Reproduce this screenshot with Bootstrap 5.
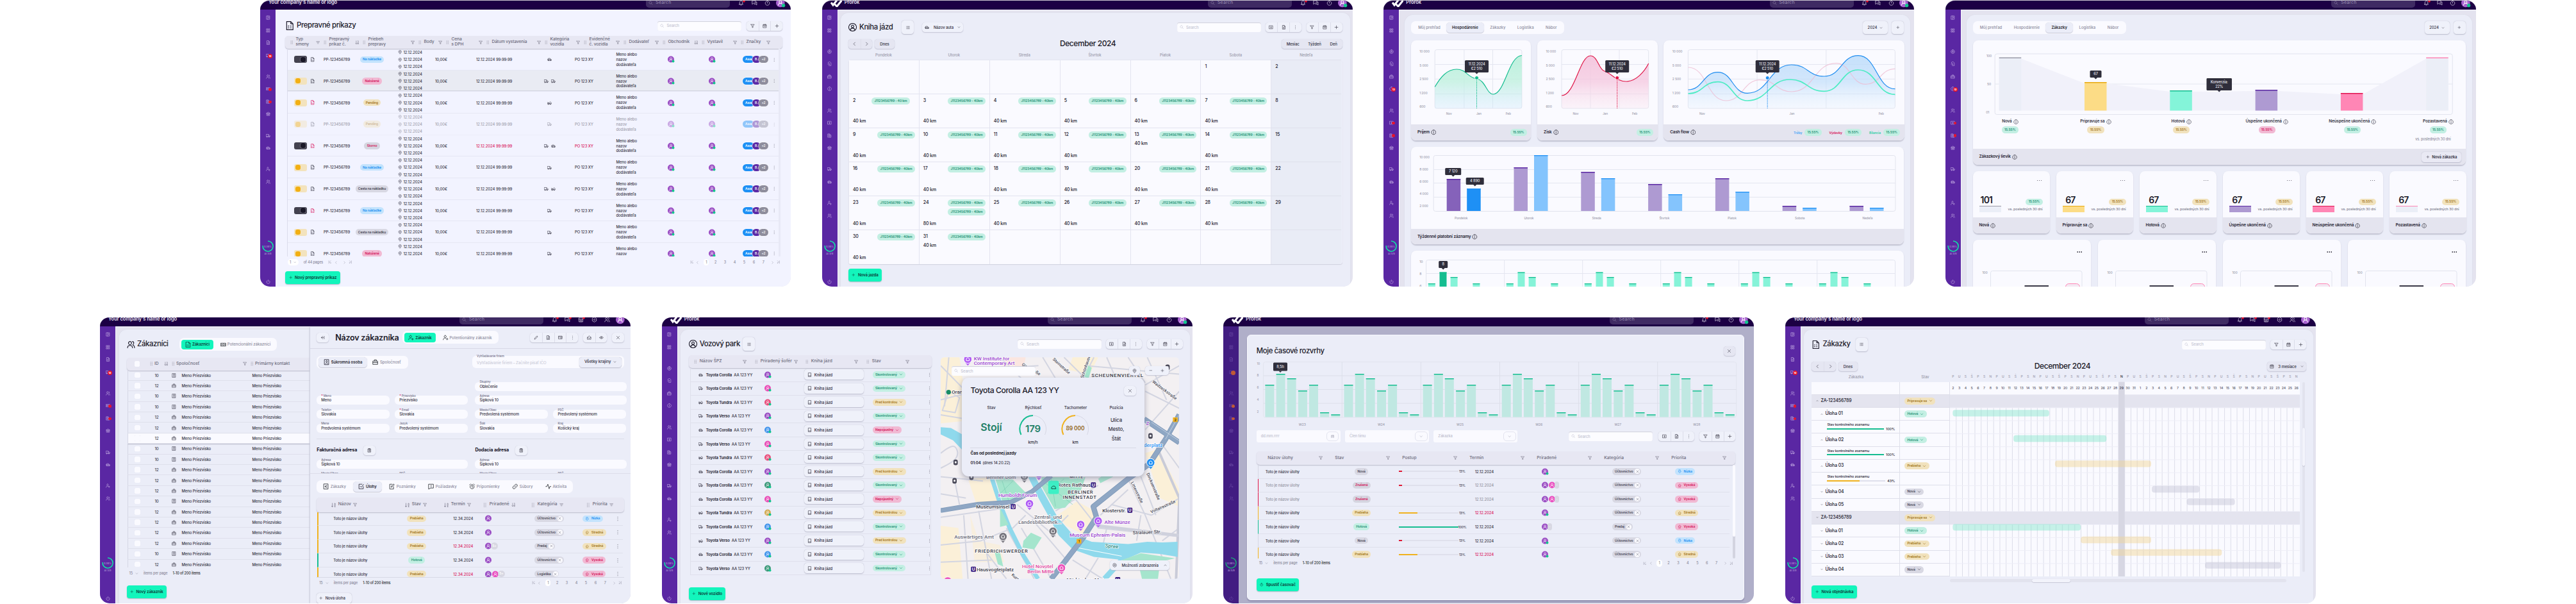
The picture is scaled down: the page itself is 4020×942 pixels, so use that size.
<!DOCTYPE html>
<html lang="sk">
<head>
    <meta charset="UTF-8">
    <meta name="viewport" content="width=device-width, initial-scale=1.0">
    <title>Prorok</title>
    <link href="https://cdn.jsdelivr.net/npm/bootstrap@5.3.0/dist/css/bootstrap.min.css" rel="stylesheet">
    <script src="https://cdn.jsdelivr.net/npm/bootstrap@5.3.0/dist/js/bootstrap.bundle.min.js"></script>
    <style>
        body {
            width: 4020px;
            height: 942px;
            overflow: hidden;
            background: #fff;
            color: #353343;
            font: 500 6px/1.2 Inter, "Open Sans", sans-serif;
            letter-spacing: -.02em;
        }
        .frames { gap: 48.67px; }
        .frames-top { padding-left: 406px; }
        .frames-bottom { padding-left: 156px; margin-top: 47px; }
        .app-frame { width: 828px; height: 447px; border-radius: 15px; overflow: hidden; border-top: 1px solid #c9c6d0; background: #e4e3ef; flex: none; }
        .frames-bottom .app-frame { border-top-color: #fff; }
        .ico { flex: none; fill: none; stroke: currentColor; stroke-width: 2; stroke-linecap: round; stroke-linejoin: round; display: block; }
        .z0 { min-width: 0; min-height: 0; }

        /* top bar */
        .topbar { height: 14px; background: #1c0044; overflow: hidden; flex: none; color: #cfc9de; }
        .topbar-in { height: 16px; margin-top: -5px; padding: 0 5px 0 13px; }
        .topbar .brand-name { font-size: 7.6px; font-weight: 600; color: #e6e2ef; letter-spacing: -.01em; }
        .topbar .find { width: 131px; height: 16px; border-radius: 5px; background: #3f2b63; color: #8d80a8; padding-left: 4px; margin-right: 7px; font-size: 7px; letter-spacing: .02em; }
        .topbar .slot { width: 20.7px; }

        /* side bar */
        .side { width: 24px; background: #5a27a3; color: #c8b2e6; padding-top: 3px; flex: none; }
        .side .slot { height: 19.5px; flex: none; position: relative; }
        .side .brk { height: 13.7px; }
        .side .num { position: absolute; left: 12px; top: 7px; width: 7px; height: 7px; border-radius: 4px; background: #e8132b; color: #fff; font-size: 4px; font-weight: 700; line-height: 7px; text-align: center; }
        .side .dot { position: absolute; left: 13px; top: 8px; width: 4.5px; height: 4.5px; border-radius: 3px; background: #e8132b; }
        .side .credit { height: 12px; font-size: 4px; color: #a68fd0; margin-bottom: 30px; }
        .side-dim { background: #421d82; color: #6c4ba6; }
        .side-dim .num, .side-dim .dot { background: #c05a35; color: #c05a35; }

        .edge { border-left: 1px solid #f6f6fc; border-top: 1px solid #f6f6fc; }
        .pane { background: #ebedf8; border: 1px solid #dfe0ec; border-bottom: 0; border-radius: 13px 13px 0 0; }
        .ttl { font-size: 11.4px; font-weight: 500; color: #1c1a29; letter-spacing: -.035em; }
        .soft { background: #eff1fa; box-shadow: 0 .7px 1.5px #b9bacb, 0 0 .6px #c9cad8; border-radius: 4.5px; color: #2e2c3b; }
        .soft-g { background: #e5e6f2; }
        .grp > div { width: 18.7px; height: 15px; }
        .grp > div + div { border-left: .5px solid #dcddea; }
        .find-l { width: 131px; height: 15px; border-radius: 3px; background: #fcfcff; box-shadow: inset 0 1px 1px #cfd0dc; color: #c3c4d2; padding-left: 4px; }
        .list-btn { width: 19.5px; height: 21px; }
        .cta { height: 20px; border-radius: 4px; background: #13f5bc; color: #0b3b39; font-weight: 600; box-shadow: 0 1px 1.5px #a9b8c4; padding: 0 5.5px; font-size: 6.2px; gap: 4px; }
        .thead-x { background: #e7e7f3; border-radius: 5px; box-shadow: 0 1px 1.5px #bbbccc; color: #6d6c7d; font-size: 6.7px; line-height: 7.6px; font-weight: 500; letter-spacing: 0; }
        .pl { display: inline-flex; align-items: center; gap: 3px; height: 10.6px; padding: 0 4.3px; border-radius: 5.3px; font-size: 5.1px; font-weight: 600; line-height: 1; white-space: nowrap; }
        .pl-g { background: #c3efe3; color: #1c8f74; }
        .pl-y { background: #f1e2bd; color: #a3751a; }
        .pl-b { background: #c3e3fd; color: #1b8ff2; }
        .pl-p { background: #f1b9d3; color: #d3135a; }
        .pl-k { background: #d8d8e3; color: #454353; }
        .pl-kp { background: #d5d5e0; color: #d3135a; }
        .red { color: #d9155b; }
        .pager { color: #8a8a9b; font-size: 5.5px; }
        .pager .on { background: #fff; border-radius: 5px; padding: 2px 3px; }
        .chip { background: #fafaff; border-radius: 7px; color: #8b8a9c; letter-spacing: 0; }
        .chip .act { background: #ebedf8; color: #1f1d2c; font-weight: 600; border-radius: 5.5px; box-shadow: 0 .7px 1px #c5c6d5; }
        .chip .go { background: #13f5bc; border-radius: 4px; height: 15px; gap: 2px; padding: 0 6px; color: #0b3b39; font-weight: 600; letter-spacing: -.02em; }
        .tile { background: #fafaff; border-radius: 8px; overflow: hidden; box-shadow: 0 1.2px 1.5px #c3c4d3; flex: none; }
        .tile .foot { background: #e4e4ef; height: 25px; padding: 0 6.5px 0 10px; font-size: 6.4px; font-weight: 600; color: #24222f; gap: 2px; }
        svg text { font-family: Inter, "Open Sans", sans-serif; }

        /* transport orders */
        .s1 { background: #f2f3ff; padding: 16px 13px 0 14px; }
        .s1 .thead-x { height: 20px; display: grid; grid-template-columns: 52px 61px 87px 43px 63px 91px 61px 62px 61px 61px 61px 52px; padding-left: 7px; letter-spacing: -.02em; }
        .s1 .thead-x > div { padding-right: 5px; gap: 3px; }
        .s1 .tbody-x { height: 324px; overflow: hidden; margin: 0 3px; border-left: 1px solid #dcdcec; border-right: 3px solid #e8e9f6; }
        .s1 .line { display: grid; grid-template-columns: 56px 52px 47px 75px 64px 94px 41px 83.5px 75.5px 20px 44px 20px 38px 46px 8px; height: 33.67px; align-items: center; border-bottom: .6px solid #e6e7f4; }
        .s1 .hov { background: #e9ebf3; box-shadow: inset 0 -1px 0 #d4d5e0; }
        .s1 .off { opacity: .45; }
        .s1 .loc { line-height: 11.2px; }
        .tog { width: 20px; height: 11px; border-radius: 3px; background: #f3e3bd; padding: 0 2px; }
        .tog i { width: 8px; height: 8px; border-radius: 3px; background: #f2af13; display: block; }
        .tog-n { background: #43424f; justify-content: flex-end; }
        .tog-n i { background: #1a1827; box-shadow: 0 0 0 .6px #7f7e8d; }
        .tags > span { height: 11px; border-radius: 5.5px; color: #fff; line-height: 11px; font-size: 5px; margin-right: -3px; box-shadow: 0 0 0 .6px #fff; }

        /* trip book */
        .s2 { margin: 3px 3px 0 3px; padding: 12px 12px 0 12.3px; }
        .cal-head, .cal { display: grid; grid-template-columns: repeat(7, 109.9px); }
        .cal-head { height: 17px; padding-top: 6px; color: #9a9aab; text-align: center; }
        .cal { grid-auto-rows: 53.1px; border-radius: 4px; overflow: hidden; box-shadow: 0 1px 1px #d0d1de; }
        .cal > div { background: #fafaff; border-top: 1px solid #e3e4f0; border-left: 1px solid #e3e4f0; padding: 5px 6px 5.5px 6px; font-size: 7px; color: #22202e; }
        .cal > div:nth-child(7n) { background: #e9ecf6; border-top-color: #dfe1ec; }
        .cal .km { font-size: 6.9px; }

        /* dashboards */
        .s3 { margin: 6px 5px 0 6.6px; padding: 10px 10.4px 0 10px; border-radius: 15px 15px 0 0; }
        .s3 .chip { height: 20px; width: 239px; padding: 2px 2px; }
        .s3 .chip > div { height: 16px; padding: 0 4px; flex: 1 1 auto; justify-content: center; }
        .stats { display: grid; grid-template-columns: repeat(6, 120px); gap: 10px; }
        .quads { display: grid; grid-template-columns: repeat(4, 184px); gap: 11px; }
        .stats .tile { height: 97px; }
        .big { font-size: 14px; font-weight: 600; color: #1c1a29; letter-spacing: -.06em; }
        .swatch { width: 34.5px; height: 10px; border-top: 1.2px solid; }

        /* customers */
        .s5l { width: 299px; margin-left: 0; flex: none; padding: 13px 0 0 12px; border-radius: 13px 0 0 0; border-right: 0; margin-top: 3px; }
        .s5l .chip { height: 20px; padding: 2px 3px; }
        .s5l .thead-x { height: 20px; display: grid; grid-template-columns: 35px 34px 123px 90px; border-radius: 5px 0 0 5px; }
        .s5l .thead-x > div { gap: 2px; padding-right: 4px; }
        .s5l .line { display: grid; grid-template-columns: 34px 22px 16px 114px 90px; height: 16.4px; align-items: center; border-bottom: .6px solid #dfe0ec; border-left: 1px solid #d6d7e4; }
        .s5l .tbody-x { height: 307px; overflow: hidden; margin-left: 1px; }
        .s5l .hov { background: #fafaff; box-shadow: 0 1px 1.5px #b9bacb; position: relative; }
        .cbx { width: 8.5px; height: 8.5px; border-radius: 1.5px; background: #fafaff; box-shadow: 0 0 .6px #c9cad8; }
        .s5r { background: #ebedf8; box-shadow: -1px 0 2px #c5c6d6; position: relative; }
        .s5-head { height: 34px; border-bottom: 1px solid #d8d9e6; padding: 0 10px 0 10.5px; }
        .s5-head .ttl { width: 94px; margin: 0 11px 0 10.5px; font-size: 12.6px; font-weight: 600; letter-spacing: -.02em; white-space: nowrap; }
        .s5-form { height: 196px; overflow: hidden; border-bottom: 1px solid #dcdde9; padding: 11px 10px 0 10.7px; }
        .two { display: grid; grid-template-columns: 236px 237px; column-gap: 11.3px; }
        .half { display: grid; grid-template-columns: 114px 114px; column-gap: 8px; }
        .fld { height: 14px; background: #fafaff; border-radius: 6px; padding: 0 7px; margin-bottom: 7.6px; line-height: 1; font-size: 6px; }
        .fld > small { display: block; height: 4.5px; font-size: 4.7px; color: #73728a; position: relative; top: -2.5px; }
        .fld > span { display: block; margin-top: -.5px; }
        .s5-table { display: grid; grid-template-columns: 122px 61px 68px 75px 78px 1fr; height: 22.5px; }
        .s5-line { display: grid; grid-template-columns: 130px 46px 34px 50px 77px 75px 40px 1fr; height: 21.6px; align-items: center; border-left: 2px solid #f0b21e; margin: 0 2px 0 1px; padding-right: 4px; border-bottom: .6px solid #dfe0ec; }
        .xx { width: 8px; height: 8px; border-radius: 4px; background: #fafaff; margin-right: -2.5px; }

        /* fleet */
        .s6 { margin: 3px 3px 0 3px; padding: 12px 11px 0 13px; }
        .s6 .thead-x { height: 20px; width: 379px; display: grid; grid-template-columns: 95px 79px 95px 80px; padding-left: 7.5px; }
        .s6 .thead-x > div { gap: 3px; padding-right: 12px; }
        .s6 .line { display: grid; grid-template-columns: 12px 91px 21px 41px 107px 85px 8px; height: 21.57px; align-items: center; width: 376px; margin-left: 2px; padding-left: 12px; border: .6px solid #dfe0ec; border-top: 0; }
        .s6 .book { width: 93px; height: 16px; padding-left: 5px; gap: 4px; }
        .mapbox { width: 372.4px; height: 346px; border-radius: 6px; overflow: hidden; position: relative; margin-left: 14px; flex: none; }
        .mapbox > * { position: absolute; }
        .m-find { left: 17px; top: 14px; }
        .m-pin { left: 294px; top: 14px; width: 17px; height: 14px; }
        .m-zoom { left: 319px; top: 14px; width: 37px; height: 14px; }
        .m-opt { left: 264px; top: 317px; width: 93px; height: 15px; font-size: 6px; }
        .m-pop { left: 33.5px; top: 32px; width: 285px; height: 154px; border-radius: 11px; background: #ebedf8; box-shadow: 0 3px 8px #77799099; padding: 13px 13px 0 13.3px; }
        .m-cols { display: grid; grid-template-columns: 65px 66px 66px 61px; height: 78px; margin-top: 4px; text-align: center; border-bottom: 1px solid #d9dae6; font-size: 6.4px; }

        /* time sheets */
        .dim { background: #b0afc9; }
        .sheet { width: 776px; height: 413.5px; margin: 13px 0 0 13px; border-radius: 6px; background: #ebedf8; padding: 17px 13px 0 13.4px; border: 1px solid #f7f7fd; box-shadow: 0 2px 2px #8f8eae; }
        .pick { width: 131px; height: 19px; border-radius: 3px; background: #fafaff; color: #c0c1cf; padding: 0 2.5px 0 7px; margin-right: 7.3px; font-size: 5.8px; }
        .pick > div { width: 19.5px; height: 15px; border: .8px solid #e3e4ef; border-radius: 5px; color: #9a9aab; }
        .s7-table { display: grid; grid-template-columns: repeat(7, 105px); height: 21px; padding-left: 17.5px; }
        .s7-line { display: grid; grid-template-columns: 136px 48px 24px 93px 23px 107px 110px 98px 1fr; height: 21.57px; align-items: center; border-left: 1.5px solid #d6d7e4; margin: 0 5px 0 2px; border-bottom: .6px solid #dfe0ec; padding-left: 11px; }
        .prog { height: 2px; background: #dfe0ec; }
        .prog > div { height: 2px; }

        /* gantt */
        .gantt-side { width: 216px; flex: none; }
        .g-row { display: grid; grid-template-columns: 137.7px 78.3px; height: 20.24px; }
        .g-row > div { background: #fafaff; border-bottom: 1px solid #dedfea; border-right: 1px solid #dedfea; font-size: 6.9px; color: #22202e; }
        .g-grp > div { background: #e4e4ef; }
        .scroll-h { height: 5px; width: 525px; margin: 3.5px 0 0 216px; background: #e2e3ee; border-radius: 3px; padding-left: 128px; }
        .scroll-h > div { width: 60px; height: 5px; background: #f2f3fb; border-radius: 3px; box-shadow: 0 .5px 1px #a9aabc; }
    </style>
</head>
<body>
    <div class="frames frames-top d-flex" id="rowTop"></div>
    <div class="frames frames-bottom d-flex" id="rowBottom"></div>

    <script>
        const paths = {
            panel: 'M4 3h16v18H4zM10 3v18M14 9h3M14 13h3',
            grid: 'M4 3h6v7H4zM14 3h6v7h-6zM4 14h6v7H4zM14 14h6v7h-6z',
            file: 'M6 2h8l5 5v15H6zM14 2v6h5M9 13h6M9 17h6',
            fileDot: 'M6 2h8l5 5v15H6zM14 2v6h5M9 17h.1M13 17h2M9 13h.1',
            fileDown: 'M6 2h8l5 5v15H6zM14 2v6h5M12 11v7M9.500 15.500l2.500 2.500 2.500-2.500',
            doc: 'M4 1h11l6 6v16H4zM15 1v6h6M8 13h2M14 13h2M8 18h2M14 18h2',
            users: 'M9 3a4.500 4.500 0 1 0 .1 0M2 21c0-9 14-9 14 0M16 3c5 0 5 8 1 9M18 14c3 1 4 4 4 7',
            user: 'M12 3a4.500 4.500 0 1 0 .1 0M4 21c0-9 16-9 16 0',
            userPlus: 'M10 3a4.500 4.500 0 1 0 .1 0M2 21c0-7 6-9 10-6M18 15v7M14.500 18.500h7',
            userGear: 'M10 3a4.500 4.500 0 1 0 .1 0M2 21c0-7 6-9 10-6M18 15a3 3 0 1 0 .1 0',
            money: 'M2 6h20v12H2zM12 9a3 3 0 1 0 .1 0M5 9v6M19 9v6',
            archive: 'M3 4h18v16H3zM12 8v8M9 13l3 3 3-3',
            building: 'M4 3h10v18H4zM14 9h6v12h-6M7 7h4M7 11h4M7 15h4',
            bank: 'M3 9l9-6 9 6zM4 9v12h16V9M8 12v6M12 12v6M16 12v6',
            truck: 'M2 5h12v12H2zM14 9h4l4 4v4h-8M6 17a2 2 0 1 0 .1 0M17 17a2 2 0 1 0 .1 0',
            tow: 'M2 13h12v4H2zM14 7h4l4 5v5h-8M6 17a2 2 0 1 0 .1 0M17 17a2 2 0 1 0 .1 0M3 9l8 4',
            car: 'M3 17v-5l3-5h9l3 5 4 1v4zM7 16a2 2 0 1 0 .1 0M17 16a2 2 0 1 0 .1 0M3 12h15',
            case: 'M3 8h18v13H3zM8 8V3h8v5M3 14h18',
            target: 'M12 2a10 10 0 1 0 .1 0M12 7a5 5 0 1 0 .1 0M12 11v2',
            arrowFile: 'M9 2h6l5 5v15H9M3 14h10M9 10l4 4-4 4M5 9V4',
            info: 'M12 2a10 10 0 1 0 .1 0M12 11v6M12 7v.5',
            power: 'M12 2v9M6 6a9 9 0 1 0 12 0',
            bell: 'M6 17V10c0-8 12-8 12 0v7l2 1H4zM10 21h4',
            chat: 'M3 3h13v10H8l-5 4zM19 8h2v13l-4-4h-6',
            timer: 'M12 4a9 9 0 1 0 .1 0M12 9v4M10 1h4',
            store: 'M3 9l2-6h14l2 6zM4 9v12h16V9M9 21v-7h6v7',
            gear: 'M12 2l8.500 5v10L12 22l-8.500-5V7zM12 9a3 3 0 1 0 .1 0',
            search: 'M10 3a7 7 0 1 0 .1 0M15 15l6 6',
            filter: 'M3 4h18l-7 8v8h-4v-8z',
            lines: 'M3 6h18M6 12h12M10 18h4',
            list: 'M8 5h13M8 12h13M8 19h13M3 5h1M3 12h1M3 19h1',
            calendar: 'M4 5h16v16H4zM4 10h16M8 2v4M16 2v4M9 14h6',
            paste: 'M5 4h14v17H5zM9 2h6v4H9zM10 11v6h4v-6z',
            plus: 'M12 4v16M4 12h16',
            minus: 'M4 12h16',
            close: 'M5 5l14 14M19 5L5 19',
            dots: 'M12 4v.5M12 12v.5M12 20v.5',
            hdots: 'M4 12h.5M12 12h.5M20 12h.5',
            grip: 'M8 3v.5M8 9v.5M8 15v.5M8 21v.5M16 3v.5M16 9v.5M16 15v.5M16 21v.5',
            sort: 'M7 3v18M3 17l4 4 4-4M16 3h3v7M16 14h4v7h-4z',
            az: 'M5 3v18M1 17l4 4 4-4M16 10V5a2 2 0 0 1 4 0v5M16 14h4l-4 7h4',
            down: 'M5 8l7 8 7-8', up: 'M5 16l7-8 7 8', left: 'M15 4l-8 8 8 8', right: 'M9 4l8 8-8 8',
            first: 'M5 3v18M18 3l-9 9 9 9v-6', last: 'M19 3v18M6 3l9 9-9 9v-6',
            pin: 'M12 22c-16-14-5-20 0-20s16 6 0 20M12 7a3.500 3.500 0 1 0 .1 0',
            face: 'M12 1a11 11 0 1 0 .1 0M12 6a3.600 3.600 0 1 0 .1 0M6 19c1-6 11-6 12 0',
            idcard: 'M4 2h16v20H4zM12 6a3 3 0 1 0 .1 0M8 18c0-5 8-5 8 0',
            back: 'M12 5l-7 7 7 7M5 12h11M20 5v14',
            pen: 'M4 20l2-6L17 3l4 4L10 18z', mail: 'M3 4h18v15H3zM3 9h18M13 14h5',
            open: 'M3 10l9-7 9 7v11H3zM3 11l9 5 9-5', eye: 'M2 12c5-8 15-8 20 0-5 8-15 8-20 0M12 9a3 3 0 1 0 .1 0',
            euro: 'M4 2h16v20H4zM15 8c-7-3-7 11 0 8M8 12h5',
            check: 'M20 12v9H3V3h12M8 11l4 4 9-11', note: 'M18 13v9H3V3h9M9 14l1-4 8-8 3 3-8 8z',
            warn: 'M3 3h18v15H10l-7 4zM12 7v4M12 14v.5', alarm: 'M12 5a8 8 0 1 0 .1 0M12 9v5l3 1M2 6l4-4M22 6l-4-4',
            link: 'M10 14l5-5M9 8l4-4a5 5 0 0 1 7 7l-4 4M15 16l-4 4a5 5 0 0 1-7-7l4-4', pulse: 'M2 12h4l4-9 5 18 3-9h4',
            book: 'M6 2h13v20H6zM6 17h13', lowArrow: 'M8 3h8v9h4l-8 9-8-9h4z', highArrow: 'M8 21h8v-9h4l-8-9-8 9h4z'
        };
        const ic = (n, s = 7, c = '') => `<svg class="ico ${c}" width="${s}" height="${s}" viewBox="0 0 24 24"><path d="${paths[n]}"/></svg>`;
        const av = (color = '#9b4fc4', dot = true, s = 11) => `<svg width="${s}" height="${s}" viewBox="0 0 22 22" class="flex-shrink-0"><circle cx="10" cy="11" r="10" fill="${color}"/><path d="M10 6a3 3 0 1 0 .1 0M5 17c1-7 9-7 10 0" fill="none" stroke="#fff" stroke-width="1.500"/>${dot ? '<circle cx="17" cy="17" r="4" fill="#13c58e"/>' : ''}</svg>`;
        const pill = (t, k, icon = '') => `<span class="pl pl-${k}">${icon}${t}</span>`;
        const grp = (names, c = '') => `<div class="soft grp d-flex ${c}">${names.map(n => `<div class="d-flex align-items-center justify-content-center">${ic(n, 7)}</div>`).join('')}</div>`;
        const find = () => `<div class="find-l d-flex align-items-center gap-1">${ic('search', 6.5)}Search</div>`;
        const cta = (t, icon = 'plus') => `<div class="cta d-inline-flex align-items-center">${ic(icon, 5.5)}${t}</div>`;
        const listBtn = `<div class="soft list-btn d-flex align-items-center justify-content-center">${ic('list', 6)}</div>`;
        const rep = (n, f) => Array.from({ length: n }, (_, i) => f(i)).join('');
        const pages = `<div class="d-flex align-items-center">${ic('first', 5.5)}<span class="px-1">${ic('left', 5)}</span>${rep(7, i => `<span class="${i ? '' : 'on'}" style="margin:0 ${i ? 5.8 : 2.8}px">${i + 1}</span>`)}<span class="px-1">${ic('right', 5)}</span>${ic('last', 5.5)}</div>`;
        const perPage = `<div class="d-flex align-items-center"><span>15</span><span class="mx-1">${ic('down', 5)}</span><span class="mx-1">items per page</span><span class="text-dark ms-1">1-10 of 200 items</span></div>`;

        const T = (x, y, t, o = {}) => `<text x="${x}" y="${y}" font-size="${o.s || 5}" fill="${o.f || '#9c9cad'}" text-anchor="${o.a || 'start'}" font-weight="${o.w || 500}" dominant-baseline="central">${t}</text>`;
        const L = (x1, y1, x2, y2, c = '#e4e6f0', w = 1) => `<path d="M${x1} ${y1}L${x2} ${y2}" stroke="${c}" stroke-width="${w}"/>`;
        const R = (x, y, w, h, f, r = 0, extra = '') => `<rect x="${x}" y="${y}" width="${w}" height="${h}" fill="${f}" rx="${r}" ${extra}/>`;
        const box = (x, y, w, h) => R(x, y, w, h, 'none', 3, 'stroke="#e2e4ee"');
        const svg = (x, y, w, h, inner) => `<svg class="d-block" width="${w}" height="${h}" viewBox="${x} ${y} ${w} ${h}">${inner}</svg>`;
        const tip = (cx, y, w, h, lines) => R(cx - w / 2, y, w, h, '#2f2e3b', 1.500) + `<path d="M${cx - 2.500} ${y + h}h5l-2.500 2.500z" fill="#2f2e3b"/>` +
            lines.map((t, i) => T(cx, y + h * (i + .5) / lines.length + (lines.length > 1 ? (i ? -.8 : .8) : 0), t, { s: 5.6, f: '#e8e8f0', a: 'middle' })).join('');
        // smooth line through turning points, flat at each of them
        const curve = p => p.map(([x, y], i) => i ? `C${(p[i - 1][0] + x) / 2} ${p[i - 1][1]} ${(p[i - 1][0] + x) / 2} ${y} ${x} ${y}` : `M${x} ${y}`).join('');

        const sideA = ['panel', 'grid', 'file', 'truck#', '', 'users', 'money.', 'building.', 'bank', '', 'truck', 'car', '', 'userGear', 'users'];
        const sideB = ['panel', 'grid', '', 'target', 'arrowFile', 'case', 'info', '', 'users', 'archive', 'building', 'bank', '', 'truck', 'car', '', 'userGear', 'users'];
        const sideC = sideB.map(n => n === 'info' ? 'info#' : n === 'archive' || n === 'building' ? n + '.' : n);

        function topbar(kind) {
            const logo = `<svg width="18" height="14" viewBox="0 0 18 14"><path d="M1 7l3 4 7-9M6 9l4 4 8-10" fill="none" stroke="#fff" stroke-width="3"/></svg>`;
            const brand = { text: `<span class="brand-name">Your company's name or logo</span>`, logo: `${logo}<span class="brand-name ms-1">Prorok</span>`, none: '' }[kind[0]];
            const icons = kind[1] ? ['bell', 'chat', 'store', 'gear', 'users'] : ['bell', 'chat', 'timer'];
            return `<div class="topbar"><div class="topbar-in d-flex align-items-center">${brand}
                <div class="find d-flex align-items-center gap-1 ms-auto">${ic('search', 7)}Search</div>
                ${icons.map((n, i) => `<div class="slot d-flex justify-content-center position-relative">${ic(n, 9)}${(kind[1] ? i < 3 : !i) ? '<svg class="position-absolute top-0 end-0 me-1" width="4" height="4"><circle cx="2" cy="2" r="1.800" fill="#e8132b"/></svg>' : ''}</div>`).join('')}
                <div class="slot d-flex justify-content-center">${av('#a862d0', !kind[1], 15)}</div></div></div>`;
        }
        function sidebar(items, dim) {
            return `<div class="side d-flex flex-column ${dim ? 'side-dim' : ''}">${items.map(n => !n ? '<div class="brk flex-shrink-0"></div>' :
                `<div class="slot d-flex align-items-center justify-content-center">${ic(n.replace(/[#.]/, ''), 7)}${n.endsWith('#') ? '<span class="num">12</span>' : n.endsWith('.') ? '<span class="dot"></span>' : ''}</div>`).join('')}
                <div class="mt-auto text-center"><svg width="20" height="20" viewBox="0 0 20 20"><path d="M10 2a8 8 0 1 1-7.800 7" fill="none" stroke="${dim ? '#1f9d78' : '#12dfa5'}" stroke-width="1.600"/><text x="10" y="11.500" font-size="4" text-anchor="middle" fill="#a68fd0">0.39%</text></svg></div>
                <div class="credit text-center">AI 3/9</div><div class="d-flex justify-content-center pb-1">${ic('power', 7)}</div></div>`;
        }
        const frame = (kind, items, main, dim) => `<div class="app-frame d-flex flex-column">${topbar(kind)}<div class="d-flex flex-grow-1 z0">${sidebar(items, dim)}<div class="flex-grow-1 z0 ${dim ? 'dim' : 'edge'}">${main}</div></div></div>`;
        const th = (t, f = 'filter', g = true) => `<div class="d-flex align-items-center">${g ? ic('grip', 6.500) : ''}<span class="text-nowrap">${t}</span>${f ? ic(f, 6.500, 'ms-auto') : ''}</div>`;

        // 1: transport orders
        function orders() {
            const rows = [['n', 0, 'Na nákladke', 'b', 'car'], ['y', 0, 'Naložené', 'p', 'truck truck', 'hov'], ['y', 1, 'Pending', 'y', 'tow'], ['y', 0, 'Pending', 'y', 'truck', 'off'],
                ['n', 1, 'Storno', 'kp', 'truck car', 'bad'], ['y', 0, 'Na nákladke', 'b', 'truck'], ['y', 0, 'Cesta na nákladku', 'k', 'truck tow'], ['n', 1, 'Na nákladke', 'b', 'truck'],
                ['y', 0, 'Cesta na nákladku', 'k', 'truck'], ['y', 0, 'Naložené', 'p', 'truck']];
            const head = th('Typ<br>smeny', 'lines') + th('Prepravný<br>príkaz č.', 'sort') + th('Priebeh<br>prepravy') + th('Body') + th('Cena<br>s DPH') + th('Dátum vystavenia') +
                th('Kategória<br>vozidla') + th('Evidenčné<br>č. vozidla') + th('Dodávateľ') + th('Obchodník', 'sort') + th('Vystavil') + th('Značky');
            return `<div class="s1 h-100">
                <div class="d-flex align-items-center" style="height:16px"><span class="ttl d-flex align-items-center">${ic('doc', 14)}<span class="ms-1">Prepravné príkazy</span></span>
                    <div class="ms-auto me-2">${find()}</div>${grp(['filter', 'calendar', 'plus'])}</div>
                <div class="thead-x mt-2">${head}</div>
                <div class="tbody-x">${rows.map(([t, r, s, k, v, c = '']) => `<div class="line ${c}">
                    <div class="d-flex align-items-center"><div class="tog d-flex align-items-center ${t === 'n' ? 'tog-n' : ''}" style="margin:0 5px 0 10px"><i></i></div><span class="${r ? 'red' : ''}">${ic('fileDot', 7.500)}</span></div>
                    <div>PP-123456789</div><div class="text-center text-nowrap d-flex justify-content-center">${pill(s, k)}</div>
                    <div class="loc" style="padding-left:17px">${rep(3, () => `<div class="d-flex align-items-center">${ic('pin', 6.500, 'me-1')}<span style="margin-left:-2px">12.12.2024</span></div>`)}</div>
                    <div>10,00€</div><div class="${c === 'bad' ? 'red' : ''}">12.12.2024 99:99:99</div>
                    <div class="d-flex justify-content-center gap-1">${v.split(' ').map(n => ic(n, 7)).join('')}</div>
                    <div class="${c === 'bad' ? 'red' : ''}" style="padding-left:19px">PO 123 XY</div><div style="line-height:7.800px">Meno alebo<br>nazov<br>dodávateľa</div>
                    <div class="text-center">${av()}</div><div></div><div class="text-center">${av()}</div><div></div>
                    <div class="tags d-flex"><span style="width:18px;background:#1e90f5;padding-left:4px">Aaaa</span><span style="width:13px;background:#5c2ba6;padding-left:4px">B.</span><span style="width:15px;background:#8e8d9c;text-align:center">+2</span></div>
                    <div>${ic('dots', 6.500)}</div></div>`).join('')}</div>
                <div class="pager d-flex align-items-center justify-content-between px-1" style="height:18px"><div class="d-flex align-items-center gap-1"><span class="on d-flex gap-1 align-items-center">1 ${ic('down', 4.500)}</span><span class="ms-1">of 44 pages</span>${ic('first', 5.500, 'ms-1')}${ic('left', 5, 'me-1')}${ic('right', 5)}${ic('last', 5.500)}</div>${pages}</div>
                <div style="padding-top:5px">${cta('Nový prepravný príkaz')}</div></div>`;
        }

        // 2: trip book
        function trips() {
            const days = [['', '', '', '', '', 1, 2], [2, 3, 4, 5, 6, 7, 8], [9, 10, 11, 12, 13, 14, 15], [16, 17, 18, 19, 20, 21, 22], [23, 24, 25, 26, 27, 28, 29], [30, 31, '', '', '', '', '']];
            const cell = (d, r, c) => {
                const busy = r && d && c < 6, two = d === 24, first = d === 2, p = pill(first ? 'J1123456789 - 40 km' : 'J1123456789 - 40km', 'g'), high = d === 13 || d === 31;
                return `<div class="d-flex flex-column"><div class="d-flex justify-content-between"><span style="padding-top:1px">${d}</span>${busy ? `<div class="d-flex flex-column ${first ? 'pe-1 me-1' : ''}" style="gap:3.400px">${p}${two ? p : ''}</div>` : ''}</div>
                    ${busy ? `<span class="km ${high ? 'pt-1' : 'mt-auto'}">${two ? 80 : 40} km</span>` : ''}</div>`;
            };
            return `<div class="pane s2 h-100">
                <div class="d-flex align-items-center" style="height:21px"><span class="ttl d-flex align-items-center">${ic('face', 13)}<span class="ms-1">Kniha jázd</span></span><div style="margin:0 13px 0 13.500px">${listBtn}</div>
                    <div class="soft d-flex align-items-center justify-content-between px-1" style="height:15px;width:64px">${ic('car', 7)}<span>Názov auta</span>${ic('down', 5)}</div>
                    <div class="ms-auto" style="margin-right:7px">${find()}</div>${grp(['archive', 'fileDown', 'dots'], 'me-2')}${grp(['filter', 'calendar', 'plus'])}</div>
                ${navRow(`<div class="soft soft-g d-flex align-items-center justify-content-between px-2" style="height:15px;width:95px"><span>Mesiac</span><span>Týždeň</span><span>Deň</span></div>`)}
                <div class="cal-head">${['Pondelok', 'Utorok', 'Streda', 'Štvrtok', 'Piatok', 'Sobota', 'Nedeľa'].map(d => `<div>${d}</div>`).join('')}</div>
                <div class="cal">${days.map((w, r) => w.map((d, c) => cell(d, r, c)).join('')).join('')}</div>
                <div style="padding-top:7px">${cta('Nová jazda')}</div></div>`;
        }
        function navRow(right) {
            return `<div class="d-flex align-items-center mt-2" style="height:15px"><div class="d-flex flex-fill" style="flex-basis:0">${grp(['left', 'right'], 'soft-g me-1')}<div class="soft soft-g px-2 d-flex align-items-center">Dnes</div></div>
                <div class="ttl" style="font-size:12px">December 2024</div><div class="flex-fill d-flex justify-content-end" style="flex-basis:0">${right}</div></div>`;
        }

        function dashHead(active) {
            return `<div class="d-flex justify-content-between" style="margin-bottom:10px"><div class="chip d-flex">${['Môj prehľad', 'Hospodárenie', 'Zákazky', 'Logistika', 'Nábor'].map(t => `<div class="d-flex align-items-center ${t === active ? 'act' : ''}">${t}</div>`).join('')}</div>
                <div class="d-flex gap-1"><div class="soft d-flex align-items-center justify-content-center gap-1" style="width:39px;margin-right:2px">2024 ${ic('down', 5)}</div><div class="soft d-flex align-items-center justify-content-center" style="width:19px">${ic('plus', 5.500)}</div></div></div>`;
        }

        // 3: finance dashboard
        function finance() {
            const yl = x => ['10 000', '5 000', '2 500', '1 200', '600'].map((t, i) => T(x, 80 + i * 21.600, t)).join('');
            const gl = (x, w, v) => box(x, 77.5, w, 91.5) + [100.500, 123.300, 146.500].map(y => L(x, y, x + w, y)).join('') + v.map(a => L(a, 77.500, a, 169)).join('');
            const grad = (id, c1, c2) => `<linearGradient id="${id}" x1="0" y1="0" x2="0" y2="1"><stop offset="0" stop-color="${c1}"/><stop offset=".5" stop-color="${c1}" stop-opacity=".75"/><stop offset="1" stop-color="${c2}" stop-opacity=".3"/></linearGradient>`;
            const p1 = 'M79 135.500C88 120 98 108 113 108C128 108 130 121 144.300 123C158 125 160 147 170 147C188 147 194 87 214.700 86.500';
            const p2 = 'M277 149C298 149 305 87 322 87C333 87 335 108 343 110.500C356 115 362 127 378 127C393 127 406 112 412.700 99';
            const blue = curve([[474.6, 140], [521, 112.700], [567, 145.300], [636, 101], [687, 119], [740, 86.700], [797.700, 138.700]]);
            const dotted = (x, c) => `<path d="M${x} 123V169" stroke="${c}" stroke-width="1" stroke-dasharray="1.500 1"/><circle cx="${x}" cy="121.500" r="3" fill="${c}" stroke="#fff"/>`;
            const months = (a, y = 177) => ['Nov', 'Jan', 'Feb'].map((m, i) => T(a[i], y, m, { a: 'middle', s: 4.800 })).join('');
            const foot = (t, r) => `<div class="foot d-flex align-items-center"><span>${t}</span>${ic('info', 8.500)}<div class="ms-auto d-flex align-items-center gap-1">${r}</div></div>`;
            const ptop = [279, 261, 268, 287, 278, 321, 321], btop = [294, 242, 278, 303, 299, 324, 324];
            const days = ['Pondelok', 'Utorok', 'Streda', 'Štvrtok', 'Piatok', 'Sobota', 'Nedeľa'];
            return `<div class="pane s3 h-100">${dashHead('Hospodárenie')}
                <div class="d-flex" style="gap:9.700px">
                    <div class="tile">${svg(41.800, 63, 187.500, 131, `<defs>${grad('ga', '#bdf0dd', '#c9e8fb')}</defs>${yl(55)}${gl(79, 135.700, [124.700, 169.300])}<path d="${p1}V169H79z" fill="url(#ga)"/><path d="${p1}" fill="none" stroke="#15bd90" stroke-width="1.200"/>${dotted(144.300, '#15bd90')}${tip(144.300, 94, 37, 19, ['11.12.2024', '€2 510'])}${months([101, 147.500, 193.500])}`)}${foot('Príjem', pill('15.55%', 'g'))}</div>
                    <div class="tile">${svg(239, 63, 187.500, 131, `<defs>${grad('gb', '#f5c8df', '#fbe3ee')}</defs>${yl(252.500)}${gl(277, 135.700, [322, 367])}<path d="${p2}V169H277z" fill="url(#gb)"/><path d="${p2}" fill="none" stroke="#df1748" stroke-width="1.200"/>${dotted(363.700, '#df1748')}${tip(363.700, 94, 37, 19, ['11.12.2024', '€2 510'])}${months([299, 345, 391])}`)}${foot('Zisk', pill('15.55%', 'g'))}</div>
                    <div class="tile">${svg(436.200, 63, 375.500, 131, `<defs>${grad('gc', '#bcdcfa', '#e3f1fd')}</defs>${yl(450)}${gl(474.600, 323, [582.300, 690])}<path d="${blue}V169H474.600z" fill="url(#gc)" opacity=".85"/>
                        <path d="${curve([[474.600, 105], [533.600, 157], [587, 124.700], [636.400, 143], [705.500, 98.700], [751.600, 131.300], [797.700, 107.300]])}" fill="none" stroke="#eeb9d0" stroke-width="1.200" opacity=".75"/><path d="${curve([[474.600, 146], [521, 127.700], [567, 157], [633.700, 124], [687, 142.300], [740, 109], [797.700, 147.300]])}" fill="none" stroke="#4eecc4" stroke-width="1.700"/><path d="${blue}" fill="none" stroke="#1f8df0" stroke-width="1.200"/>${dotted(598.400, '#1f8df0')}${tip(598.400, 94, 37, 19, ['11.12.2024', '€2 510'])}${months([496.500, 636.500, 776])}`)}
                        ${foot('Cash flow', `<span style="color:#45a4f6;font-size:5px">Tržby</span>${pill('15.55%', 'g')}<span class="red ms-2" style="font-size:5px">Výdavky</span>${pill('15.55%', 'g')}<span class="ms-2" style="color:#2fcfa6;font-size:5px">Bilancia</span>${pill('15.55%', 'g')}`)}</div>
                </div>
                <div class="tile" style="margin-top:10px;height:152px">${svg(41.800, 229, 769.900, 128, `${['10 000', '8 000', '6 000', '4 000', '2 000'].map((t, i) => T(55, 245.500 + i * 18.900, t)).join('')}${box(77, 242.500, 720.700, 87)}${[264.500, 285.500, 307.500].map(y => L(77, y, 797.700, y)).join('')}
                    ${ptop.map((y, i) => R(97.500 + i * 104.800, y, 21.500, 329 - y, i ? '#ae9ad2' : '#8562ba') + R(97.500 + i * 104.800, y, 21.500, 1.500, '#5a27a3') + R(129 + i * 104.800, btop[i], 21.500, 329 - btop[i], i ? '#84c4fd' : '#1e90f5') + R(129 + i * 104.800, btop[i], 21.500, 1.300, '#1e90f5') + T(120 + i * 105.700, 340, days[i], { a: 'middle', s: 4.800 })).join('')}
                    ${tip(107.500, 262, 25, 11, ['7 120'])}${tip(141.500, 277, 28, 11, ['4 890'])}`)}${foot('Týždenné platobní záznamy', '')}</div>
                <div class="tile" style="margin-top:10px;height:70px">${svg(41.800, 391, 769.900, 70, `${T(55, 408, '10')}${T(55, 427, '8')}${T(55, 446, '6')}${box(65.400, 405.500, 732, 90)}${L(65.400, 426.500, 797.700, 426.500)}${rep(5, i => L(187.500 + i * 122, 405.500, 187.500 + i * 122, 470))}
                    ${rep(6, i => [[68.600, 442], [86.300, 424.500], [103.400, 432], [138.200, 442]].map(([x, y], j) => R(x + i * 122, y, 11, 50, !i && j === 1 ? '#15bd90' : '#86f3d8') + R(x + i * 122, y, 11, 1.300, '#15bd90')).join(''))}${tip(92, 407, 14, 11, ['8'])}`)}</div></div>`;
        }

        // 4: job dashboard
        function jobs() {
            const st = [['Nová', '#ebeef7', '#9b9ba8', 'g', 89.5], ['Pripravuje sa', '#fcdc86', '#e8a90f', 'y', 128], ['Hotová', '#84f4d9', '#15bd90', 'y', 141], ['Úspešne ukončená', '#ae9ad2', '#5a27a3', 'p', 140], ['Neúspešne ukončená', '#ff86b5', '#e01450', 'g', 145], ['Pozastavená', '#ebeef7', '#ff86b5', 'g', 89.5]];
            const bx = i => 82.5 + i * 133.3;
            return `<div class="pane s3 h-100">${dashHead('Zákazky')}
                <div class="tile" style="height:194px">${svg(41.800, 63, 769.900, 120, `${T(71, 87, '100', { a: 'end' })}${T(70, 131, '50', { a: 'end' })}${T(67, 175, '01', { a: 'end' })}${box(76, 84, 714, 94.500)}${L(76, 131, 790, 131)}
                    <path d="M${st.map((s, i) => `${bx(i)} ${s[4] + 2} ${bx(i) + 34.500} ${s[4] + 2}`).join('L')}V172.500H82.500z" fill="#f1f1fa"/>${st.map((s, i) => R(bx(i), s[4], 34.500, 172.500 - s[4], s[1]) + R(bx(i), s[4], 34.500, 1.500, s[2])).join('')}
                    ${tip(233.300, 110, 18, 11, ['67'])}${tip(426, 122, 39.500, 19, ['Konverzia:', '22%'])}`)}
                    <div class="d-flex" style="margin-left:-8.500px;height:49px">${st.map(s => `<div class="d-flex flex-column align-items-center flex-shrink-0" style="width:133.600px;gap:3.500px;font-weight:600;font-size:6.300px;padding-top:2.500px"><div class="d-flex align-items-center" style="gap:2px">${s[0]} ${ic('info', 8)}</div>${pill('15.55%', s[3])}${s[0] === 'Pozastavená' ? '<span style="color:#8f8ea0;font-size:5.500px;font-weight:500;padding-top:3px" class="pe-3">vs. posledných 30 dní</span>' : ''}</div>`).join('')}</div>
                    <div class="foot d-flex align-items-center">Zákazkový lievik ${ic('info', 8)}<div class="soft ms-auto d-flex align-items-center justify-content-center gap-1" style="height:16px;width:62px;font-size:6px;background:#e9e9f4">${ic('plus', 5.500)}Nová zákazka</div></div></div>
                <div class="stats" style="margin-top:10px">${st.map((s, i) => `<div class="tile d-flex flex-column"><div class="flex-grow-1 px-2"><div class="d-flex justify-content-end pe-1" style="height:37px;padding-top:10px">${ic('hdots', 9)}</div>
                    <div class="d-flex justify-content-between ps-1 pe-1 align-items-center" style="height:15px"><span class="big" style="line-height:15px">${i ? '&nbsp;67' : 101}</span><span class="d-flex" style="margin:7px -1px 0 0">${pill('15.55%', i ? 'y' : 'g')}</span></div>
                    <div class="d-flex justify-content-between align-items-center" style="margin:2px 0 0 2px"><div class="swatch" style="background:${s[1]};border-color:${s[2]}"></div><span style="font-size:5.400px;color:#77768a;padding-right:3px">vs. posledných 30 dní</span></div></div>
                    <div class="foot d-flex align-items-center">${s[0]} ${ic('info', 8)}</div></div>`).join('')}</div>
                <div class="quads" style="margin-top:10px">${rep(4, () => `<div class="tile">${svg(41.500, 374, 184, 80, `${T(60, 425, '100', { a: 'middle' })}${box(69, 422.500, 142.500, 60)}${R(122, 445, 37.500, 20, '#3a3947')}${R(186, 442.500, 22, 20, '#f4e9f3', 5, 'stroke="#ff86b5"')}<path d="M204 393h1.500M207 393h1.500M210 393h1.500" stroke="#1c1a29" stroke-width="1.500"/>`)}</div>`)}</div></div>`;
        }

        // 5: customers
        function customers() {
            const ids = [10, 12, 10, 10, 12, 12, 12, 10, 10, 12, 12, 12, 10, 12, 12, 12, 12, 10, 12];
            const fld = (l, v, r) => `<div class="fld"><small>${r ? '<b class="red">* </b>' : ''}${l}</small><span>${v}</span></div>`;
            const half = (a, b) => `<div class="half">${a}${b}</div>`;
            const tab = (i, t, on) => `<div class="d-flex align-items-center ${on ? 'act' : ''}" style="height:16px;gap:2px;padding:0 8px">${ic(i, 9.500, on ? '' : 'text-dark')}<span>${t}</span></div>`;
            const lines = [['y', 'Prebieha', 0, 1, 'Účtovníctvo', 'b', 'Nízka'], ['y', 'Prebieha', 0, 1, 'Účtovníctvo', 'y', 'Stredná'], ['y', 'Prebieha', 1, 2, 'Predaj', 'y', 'Stredná'], ['g', 'Hotová', 0, 1, 'Účtovníctvo', 'p', 'Vysoká'], ['y', 'Prebieha', 1, 3, 'Logistika', 'p', 'Vysoká']];
            const th2 = (i, t, f, p) => `<div class="d-flex align-items-center" style="gap:3px;padding-left:${p}px">${ic(i, 7.500)}${t}${ic(f, 6.500)}</div>`;
            return `<div class="d-flex h-100" style="padding-left:3.500px">
                <div class="pane s5l">
                    <div class="d-flex align-items-center"><span class="ttl d-flex align-items-center" style="width:64px">${ic('users', 13)}<span style="margin-left:3.500px">Zákazníci</span></span>
                        <div class="chip d-flex align-items-center" style="margin-left:18.500px"><div class="go d-flex align-items-center">${ic('doc', 9)}Zákazníci</div><div class="d-flex align-items-center text-nowrap" style="gap:2px;padding:0 7px 0 11px">${ic('money', 9, 'text-dark')}Potencionálni zákazníci</div></div></div>
                    <div class="thead-x" style="margin-top:10.500px"><div class="d-flex align-items-center ps-3"><span class="cbx" style="margin-left:-4px"></span></div>${th('ID', 'sort')}${th('Spoločnosť')}${th('Primárny kontakt', '')}</div>
                    <div class="tbody-x">${ids.map((n, i) => `<div class="line ${i === 6 ? 'hov' : ''}"><span class="cbx" style="margin-left:10.500px"></span><span class="text-end pe-2">${n}</span><span class="ps-2">${ic(n === 10 ? 'idcard' : 'case', 7, 'ms-1')}</span><span class="ps-2 ms-1">Meno Priezvisko</span><span class="ps-2">Meno Priezvisko</span></div>`).join('')}</div>
                    <div class="pager d-flex align-items-center ps-1" style="height:19px">${perPage}</div>
                    <div style="padding-top:9px">${cta('Nový zákazník')}</div>
                </div>
                <div class="s5r flex-grow-1 z0 d-flex flex-column">
                    <div class="s5-head d-flex align-items-center"><div style="width:18.700px">${grp(['back'])}</div><span class="ttl">Názov zákazníka</span>
                        <div class="chip d-flex align-items-center" style="height:20px;padding:0 3px"><div class="go d-flex align-items-center">${ic('userPlus', 9)}Zákazník</div><div class="d-flex align-items-center text-nowrap" style="gap:2px;padding:0 7px 0 11px">${ic('userGear', 9, 'text-dark')}Potentionálny zákazník</div></div>
                        <div class="ms-auto">${grp(['pen', 'fileDown', 'mail', 'dots'], 'me-2')}</div>${grp(['open', 'eye'], 'me-2')}${grp(['close'])}</div>
                    <div class="s5-form">
                        <div class="d-flex justify-content-between"><div class="chip d-flex align-items-center" style="height:20px;padding:0 3px">${tab('idcard', 'Súkromná osoba', 1)}${tab('case', 'Spoločnosť')}</div>
                            <div class="fld mb-0 d-flex justify-content-between pe-0" style="width:237px;height:19.500px;color:#cccdda"><div><small class="d-block" style="font-size:4.700px;color:#73728a;margin-top:-2px">Vyhľadávanie firiem</small><div style="padding-top:5px">Vyhľadávanie firiem – Začnite písať IČO</div></div><div class="soft d-flex align-items-center justify-content-between px-2 m-auto me-1" style="height:16px;width:66px;font-size:6.400px;background:#ebedf8">Všetky krajiny ${ic('down', 5)}</div></div></div>
                        <div class="two" style="margin-top:21px"><div style="padding-top:21.600px">${half(fld('Meno', 'Meno', 1), fld('Priezvisko', 'Priezvisko', 1))}${half(fld('Telefón', 'Slovakia'), fld('Email', 'Slovakia', 1))}${half(fld('Mena', 'Predvolená systémom'), fld('Jazyk', 'Predvolený systémom'))}</div>
                            <div>${fld('Skupiny', 'Oblečenie')}${fld('Adresa', 'Šípková 10')}${half(fld('Mesto/Obec', 'Predvolená systémom'), fld('PSČ', 'Predvolený systémom'))}${half(fld('Štát', 'Slovakia'), fld('Kraj', 'Košický kraj'))}</div></div>
                        <div style="border-top:1px solid #dcdde9;margin-top:2px"></div>
                        <div class="two" style="margin-top:10px;row-gap:7px">${['Fakturačná adresa', 'Dodacia adresa'].map(t => `<div class="d-flex align-items-center" style="font-size:7.200px;font-weight:700;color:#12101f;gap:10px">${t}${grp(['paste'])}</div>`).join('')}
                            ${rep(2, () => `<div>${fld('Adresa', 'Šípková 10')}${half(fld('Mesto/Obec', ''), fld('PSČ', ''))}</div>`)}</div>
                    </div>
                    <div style="padding:10px 10px 0 10.700px">
                        <div class="chip d-flex align-items-center justify-content-between" style="height:20px;width:400px;padding:0 2px">${tab('euro', 'Zákazky')}${tab('check', 'Úlohy', 1)}${tab('note', 'Poznámky')}${tab('warn', 'Požiadavky')}${tab('alarm', 'Pripomienky')}${tab('link', 'Súbory')}${tab('pulse', 'Aktivita')}</div>
                        <div class="thead-x s5-table" style="margin-top:7px">${th2('az', 'Názov', 'filter', 23)}${th2('az', 'Stav', 'filter', 16)}${th2('az', 'Termín', 'filter', 16)}${th2('grip', 'Priradené', 'sort', 8)}${th2('grip', 'Kategória', 'lines', 8)}${th2('grip', 'Priorita', 'lines', 16)}</div>
                        <div style="height:102.500px;overflow:hidden;border-bottom:.600px solid #d8d9e6">${lines.map(([k, s, bad, n, c, pk, pt]) => `<div class="s5-line" style="border-left-color:${k === 'g' ? '#15bd90' : '#f0b21e'}"><span style="padding-left:23px">Toto je názov úlohy</span><span class="d-flex justify-content-center">${pill(s, k)}</span><span></span><span class="text-nowrap ${bad ? 'red' : ''}">12.34.2024</span>
                            <span class="d-flex">${av('#9b4fc4', false)}${n > 2 ? av('#e94fc0', false) : ''}${n > 1 ? '<span class="pl pl-k" style="padding:0 2px;color:#fff;margin-left:-2px">5+</span>' : ''}</span><span>${pill(c + ` <span class="xx d-flex align-items-center justify-content-center">${ic('close', 5)}</span>`, 'k')}</span><span>${pill(pt, pk, ic(pk === 'b' ? 'lowArrow' : 'highArrow', 6.500))}</span><span class="d-flex justify-content-end">${ic('dots', 8)}</span></div>`).join('')}</div>
                        <div class="pager d-flex align-items-center justify-content-between px-1" style="height:16px">${perPage}${pages}</div>
                        <div class="soft d-inline-flex align-items-center gap-1 px-1" style="height:16px;width:55px;margin-top:8px">${ic('plus', 5.500)}Nová úloha</div>
                    </div>
                </div></div>`;
        }

        // 6: fleet
        function cityMap() {
            const S = (d, c, w) => `<path d="${d}" fill="none" stroke="${c}" stroke-width="${w}" stroke-linejoin="round"/>`;
            const P = (p, f) => `<polygon points="${p}" fill="${f}"/>`;
            const tx = (x, y, t, f = '#3a3a4a', s = 24, r = 0, sp = 0) => `<text x="${x}" y="${y}" style="font-family:Roboto,sans-serif;letter-spacing:${sp}px" font-size="${s}" fill="${f}" font-weight="500" stroke="#fff" stroke-width="4" paint-order="stroke" ${r ? `transform="rotate(${r} ${x} ${y})"` : ''}>${t}</text>`;
            const pinM = (x, y, f) => `<path d="M${x} ${y + 30}l-12-14h24z" fill="${f}"/><circle cx="${x}" cy="${y}" r="19" fill="${f}" stroke="#fff" stroke-width="3"/><path d="M${x - 7} ${y - 3}l7-5 7 5v10h-14z" fill="none" stroke="#fff" stroke-width="3"/>`;
            const U = (x, y) => R(x, y - 12, 23, 24, '#35197d', 4) + `<text x="${x + 11.500}" y="${y + 8}" font-size="20" fill="#fff" text-anchor="middle" font-weight="700">U</text>`;
            const small = (x, y) => R(x - 10, y - 13, 20, 26, '#4a4958', 8) + R(x - 4, y - 5, 8, 9, '#fff', 2);
            const streets = ['M22 -60L140 60', 'M60 -99L40 130', 'M22 100L140 70', 'M30 150L60 60L110 90L90 160Z', 'M22 170L140 190', 'M22 350C60 320 90 300 100 340S60 400 22 420', 'M22 460L220 480', 'M90 490L110 590', 'M22 540L140 560', 'M22 650L300 610', 'M22 780L210 760L360 700L420 640', 'M130 640L150 938', 'M22 860L260 850', 'M200 620L260 938', 'M240 820L330 938', 'M330 700L460 938', 'M380 590L560 740', 'M400 700L540 938', 'M450 660L620 860', 'M360 590L300 480', 'M560 620L760 500', 'M620 640L540 720', 'M650 560L760 700L1140 740', 'M770 640L900 520', 'M820 590L1010 640', 'M900 470L980 640L1100 938', 'M960 460L1030 640', 'M1010 640L1140 560', 'M800 700L780 790', 'M960 640L940 760', 'M760 840L700 938', 'M640 850L780 938', 'M1140 700L1060 760', 'M600 -99L700 0L620 60', 'M500 -99L560 0', 'M740 -99L680 20', 'M800 -99L860 40', 'M900 -99L980 20', 'M700 -60L1140 -20', 'M980 30L1140 -60', 'M980 60L1140 140', 'M990 -99L1080 100', 'M980 240L1140 60', 'M1060 310L1140 420', 'M300 -99L400 0', 'M180 -40L480 -60'];
            const ring = 'M22 618L190 590L350 580L450 530L540 455', main = 'M540 938L600 862L690 745L752 650L737 600L900 470L1000 400L1075 285L1140 170M975 190L1140 300';
            return `<svg width="372.400" height="346" viewBox="22 -99 1118 1037">${R(22, -99, 1118, 1037, '#f3f0f2')}
                ${P('22,-99 110,-99 130,40 122,200 22,210', '#fbf0d8')}${P('150,470 262,462 300,575 190,590', '#fbf0d8')}${P('22,690 105,700 125,938 22,938', '#fbf0d8')}${P('570,640 660,575 725,610 745,650 690,730 610,690', '#fbf0d8')}${P('980,350 1040,330 1140,520 1140,600 1050,560', '#fbf0d8')}${P('160,640 200,760 300,780 320,860 180,860', '#f8efdf')}${P('640,-99 760,-99 720,-20 620,-40', '#fbf0d8')}${P('330,-99 420,-99 410,-40 300,-50', '#fbe6e0')}
                ${streets.map(d => S(d, '#d3d5e1', 6)).join('')}${S('M1030 310L1140 560L1125 938', '#c9cbd8', 12)}${S('M760 690L1140 735', '#cfd1dd', 14)}
                ${P('22,228 70,232 123,262 123,335 80,290 22,262', '#8fd9ec')}${P('432,462 466,462 520,560 570,650 640,730 730,765 900,775 990,765 1060,768 1132,765 1132,835 1050,822 960,815 880,850 740,835 640,800 575,735 530,650 480,560', '#8fd9ec')}${S('M262 468L305 600L345 700L410 830L478 938', '#8fd9ec', 20)}${S('M790 938L870 850', '#8fd9ec', 26)}${S('M650 790L870 832', '#fff', 3)}
                ${P('278,470 350,462 430,545 312,580', '#a5e5cd')}${P('495,462 700,462 680,520 605,605 555,612 492,500', '#a5e5cd')}${P('300,605 340,685 300,695', '#a5e5cd')}${P('410,760 445,722 495,745 460,800 405,792', '#a5e5cd')}${P('275,815 300,815 315,880 290,870', '#a5e5cd')}${P('870,850 960,818 1120,842 1000,870 900,868', '#a5e5cd')}${P('955,895 1045,898 1040,938 965,938', '#a5e5cd')}${P('700,-70 730,-50 715,0 690,-10', '#a5e5cd')}${P('760,470 800,440 830,460 770,490', '#a5e5cd')}
                ${S('M500 480L640 590M540 470L560 600M600 470L520 540M310 480L340 570M360 480L300 540', '#79cdb2', 2)}
                ${S(ring, '#7f99b9', 22)}${S(ring, '#8fa7c4', 17)}${S(main, '#7f99b9', 25)}${S(main, '#8fa7c4', 20)}${S('M1075 285L1140 170M1010 205L1140 292', '#dbe3ee', 2)}
                ${R(1110, 182, 22, 22, '#f0b21e', 2)}${R(659, 751, 22, 22, '#f0b21e', 2)}${T(1121, 193, '2', { s: 16, f: '#222', a: 'middle' })}${T(670, 762, '1', { s: 16, f: '#222', a: 'middle' })}
                ${tx(177, -86, 'KW Institute for', '#9a45cf')}${tx(177, -64, 'Contemporary Art', '#9a45cf')}${pinM(149, -90, '#b05cf5')}${tx(728, -6, 'SCHEUNENVIERTEL', '#33333f', 24, 0, 2)}${tx(74, 72, 'Oranien')}<circle cx="59" cy="64" r="11" fill="#188b65"/>
                ${tx(545, -88, 'Steinstraße', '#454554', 20, 42)}${tx(1012, 18, 'Wadzeckstraße', '#454554', 20, 37)}${tx(400, -62, 'Gipsstraße', '#454554', 20, 30)}${tx(690, 0, 'Schönhauser', '#454554', 20, -72)}${tx(984, 218, 'Z', '#9a45cf')}${tx(974, 320, 'derplatz', '#1e90f5')}
                ${pinM(1006, 394, '#1e90f5')}${small(1005, 269)}${small(92, 393)}${small(87, 479)}${small(166, 462)}${small(1085, -52)}
                ${tx(235, 472, 'Berliner Dom', '#6d6d7b')}${pinM(414, 458, '#77767f')}${pinM(482, 446, '#b05cf5')}${tx(626, 468, 'MITTE', '#33333f', 20, 0, 1)}${tx(570, 506, 'Rotes Rathaus')}${U(726, 498)}${tx(617, 540, 'BERLINER', '#33333f', 23, 0, 2)}${tx(594, 564, 'INNENSTADT', '#33333f', 23, 0, 2)}
                ${R(526, 479, 50, 62, '#3df0c5', 9)}<path d="M541 516v-6l6-6h9l4 6 2 6zM546 516v2M557 516v2" stroke="#16544a" stroke-width="3" fill="none"/>
                ${tx(292, 554, 'Humboldt Forum', '#9a45cf')}${pinM(438, 586, '#b05cf5')}${tx(188, 609, 'Museumsinsel')}${U(350, 600)}${tx(460, 656, 'Zentral- und', '#6d6d7b')}${tx(386, 682, 'Landesbibliothek...', '#6d6d7b')}${pinM(548, 715, '#77767f')}
                ${pinM(678, 684, '#b05cf5')}${pinM(760, 667, '#b05cf5')}${tx(789, 680, 'Alte Münze', '#9a45cf')}${tx(779, 626, 'Klosterstr.')}${U(897, 617)}${tx(626, 741, 'Museum Ephraim-Palais', '#9a45cf')}${tx(922, 730, 'Stralauer Str.', '#454554', 23, -2)}${tx(792, 790, 'Spree', '#278a83', 24, 6)}
                ${tx(86, 751, 'Auswärtiges Amt', '#6d6d7b')}${pinM(314, 740, '#77767f')}${tx(182, 815, 'FRIEDRICHSWERDER', '#33333f', 23, 0, 2)}${U(164, 893)}${tx(190, 902, 'Hausvogteiplatz')}${tx(403, 888, 'Hotel Novotel', '#e0439d')}${tx(428, 913, 'Berlin Mitte', '#e0439d')}${pinM(588, 887, '#ec52bb')}
                ${tx(912, 488, 'Littenstraße', '#454554', 20, 64)}${tx(986, 446, 'Dircksenstraße', '#454554', 20, 67)}${tx(1008, 632, 'Voltairestraße', '#454554', 20, -24)}${tx(352, 922, 'Kurstraße', '#454554', 20, 40)}${tx(612, 950, 'Märkisches Museum')}${U(840, 942)}${pinM(55, 948, '#ec52bb')}</svg>`;
        }
        function fleet() {
            const rows = ['car Corolla 9b4fc4 g', 'truck Corolla e94fb8 g', 'tow Tundra e9527f y', 'truck Verso 9b4fc4 g', 'car Corolla 4596ec p', 'truck Verso e94fb8 g', 'tow Tundra e9527f g', 'car Corolla 9b4fc4 y', 'truck Corolla 3f9a7c g', 'car Corolla e94fb8 p', 'tow Tundra d3ad58 y', 'truck Corolla 4596ec g', 'tow Verso 9b4fc4 y', 'car Corolla 4596ec g', 'truck Verso 3f9a7c g'];
            const lab = { g: 'Skontrolovaný', y: 'Pred kontrolou', p: 'Nepojazdný' };
            const gauge = (t, c, tc, s, u) => `<svg width="46" height="54" viewBox="-23 -23 46 54" class="mt-1"><path d="M-18.500 10A21 21 0 0 1 0 -20" fill="none" stroke="${c}" stroke-width="2"/><path d="M0 -20A21 21 0 0 1 18.500 10" fill="none" stroke="#d5d6e3"/>${T(0, 0, t, { s, f: tc, a: 'middle', w: 600 })}${T(0, 22, u, { s: 6.500, f: '#2a2836', a: 'middle' })}</svg>`;
            return `<div class="pane s6 h-100">
                <div class="d-flex align-items-center" style="height:21px"><span class="ttl d-flex align-items-center">${ic('face', 13)}<span class="ms-1">Vozový park</span></span><div class="ms-1">${listBtn}</div>
                    <div class="ms-auto" style="margin-right:7px">${find()}</div>${grp(['archive', 'fileDown', 'dots'], 'me-2')}${grp(['filter', 'calendar', 'plus'])}</div>
                <div class="d-flex" style="margin-top:7px"><div><div class="thead-x">${['Názov ŠPZ', 'Priradený šofér', 'Kniha jázd', 'Stav'].map(t => th(t)).join('')}</div>
                    ${rows.map(r => r.split(' ')).map(([i, n, c, k]) => `<div class="line">${ic(i, 7)}<span class="text-nowrap"><b>Toyota ${n}</b>&nbsp; AA 123 YY</span>${av('#' + c)}<span></span><div class="soft book d-flex align-items-center">${ic('book', 7)}Kniha jázd</div><span>${pill(`${lab[k]} ${ic('down', 6)}`, k)}</span>${ic('dots', 7)}</div>`).join('')}</div>
                    <div class="mapbox" style="margin-top:3px">${cityMap()}
                        <div class="m-find find-l d-flex align-items-center gap-1">${ic('search', 6.500)}Search</div><div class="m-pin soft d-flex align-items-center justify-content-center">${ic('pin', 7)}</div>
                        <div class="m-zoom soft d-flex align-items-center justify-content-around">${ic('minus', 5.500)}${ic('plus', 6)}</div>
                        <div class="m-pop"><div class="d-flex justify-content-between"><span class="ttl" style="font-size:12.200px">Toyota Corolla AA 123 YY</span>${grp(['close'])}</div>
                            <div class="m-cols" style="padding-top:12px"><div>Stav<div style="font-size:16px;font-weight:600;color:#1f8067;padding-top:16px">Stojí</div></div><div>Rýchlosť<br>${gauge('179', '#15bd90', '#1f8067', 15, 'km/h')}</div><div>Tachometer<br>${gauge('89 000', '#f0b21e', '#94681a', 8.500, 'km')}</div><div>Pozícia<div style="line-height:14.700px;font-size:7.800px;padding-top:7px">Ulica<br>Mesto,<br>Štát</div></div></div>
                            <div style="font-weight:700;font-size:6.600px;padding-top:4.500px;color:#1c1a29">Čas od poslednej jazdy</div><div style="padding-top:7px"><b>01:04</b>&nbsp; (dnes 14.20.22)</div></div>
                        <div class="m-opt soft d-flex align-items-center justify-content-between px-1">${ic('gear', 7)}Možnosti zobrazenia ${ic('up', 5)}</div></div></div>
                <div style="padding-top:13px">${cta('Nové vozidlo')}</div></div>`;
        }

        // 7: time sheets
        function sheets() {
            const tops = [106, 89, 96, 115, 106, 149, 152.300], bx = [64.800, 82, 99, 116.300, 133.400, 150.500, 167.700];
            const rows = [['k', 'Nová', 'r', 1, '', 'b'], ['kp', 'Zrušená', 'r', 3, 'off', 'p'], ['kp', 'Zrušená', '', 3, 'off', 'p'], ['y', 'Prebieha', 'y', 1, 'red', 'y'], ['g', 'Hotová', 'g', 2, '', 'p'], ['k', 'Nová', 'r', 1, '', 'b'], ['y', 'Prebieha', 'y', 1, 'red', 'y']];
            const edge = { k: '#d6d7e4', kp: '#df1748', y: '#f0b21e', g: '#15bd90' }, prog = { r: ['#df1733', 6], y: ['#f0b21e', 31], g: ['#15bd90', 100] }, pr = { b: 'Nízka', p: 'Vysoká', y: 'Stredná' };
            return `<div class="sheet">
                <div class="d-flex align-items-center justify-content-between" style="height:15px"><span class="ttl">Moje časové rozvrhy</span>${grp(['close'], 'soft-g')}</div>
                <div style="height:117px;margin-top:5px">${svg(51.400, 66, 750, 110, `${box(62, 70.500, 738, 86.500)}${[92, 113.500, 135].map(y => L(62, y, 800, y, '#dddfea')).join('')}${rep(5, i => L(184.700 + i * 123.100, 70, 184.700 + i * 123.100, 157, '#dddfea'))}${[10, 8, 6, 4, 2].map((t, i) => T(52, 73 + i * 18.900, t, { s: 4.500 })).join('')}
                    ${rep(6, w => tops.map((y, i) => R(bx[i] + w * 123.100, y, 14, 156.500 - y, '#c0e8e2') + R(bx[i] + w * 123.100, y, 14, 1.500, '#15bd90')).join('') + T(122.700 + w * 123.100, 167.500, 'W' + (23 + w), { a: 'middle' }))}${tip(88.400, 71.500, 22, 13, ['8,5h'])}`)}</div>
                <div class="d-flex align-items-center" style="height:19px;margin-top:-6px">${[['dd.mm.rrrr', 'calendar'], ['Člen tímu', 'down'], ['Zákazka', 'down']].map(([t, i]) => `<div class="pick d-flex align-items-center justify-content-between">${t}<div class="d-flex align-items-center justify-content-center">${ic(i, 5.500)}</div></div>`).join('')}
                    <div class="ms-auto" style="margin-right:9.500px">${find()}</div>${grp(['archive', 'fileDown', 'dots'], 'me-2')}${grp(['filter', 'calendar', 'plus'])}</div>
                <div class="thead-x s7-table" style="margin-top:14px">${['Názov úlohy', 'Stav', 'Postup', 'Termín', 'Priradené', 'Kategória', 'Priorita'].map(t => `<div class="d-flex align-items-center justify-content-between" style="padding-right:19px">${t}${ic('filter', 6.500)}</div>`).join('')}</div>
                <div class="d-flex" style="height:145.500px;overflow:hidden"><div class="flex-grow-1">${rows.map(([k, s, p, n, c, q]) => `<div class="s7-line" style="border-left-color:${edge[k]}"><span class="${c === 'off' ? 'opacity-50' : ''}">Toto je názov úlohy</span><span class="d-flex" style="width:28px;justify-content:center">${pill(s, k)}</span><span></span>
                    <div class="${p ? 'prog' : ''}">${p ? `<div style="width:${prog[p][1]}%;background:${prog[p][0]}"></div>` : ''}</div><span style="font-size:5px">${p ? (p === 'g' ? '100%' : '&nbsp;13%') : ''}</span><span class="${c === 'red' ? 'red' : c === 'off' ? 'opacity-50' : ''}" style="padding-left:3px">12.12.2024</span>
                    <span class="d-flex">${av('#9b4fc4', n === 1)}${n > 2 ? av('#e94fc0', false) : ''}${n > 1 ? '<span class="pl pl-k" style="padding:0 3px;color:#fff;margin-left:-2px">·</span>' : ''}</span><span>${pill((k === 'g' ? 'Predaj' : 'Účtovníctvo') + ` <span class="xx d-flex align-items-center justify-content-center">${ic('close', 5)}</span>`, 'k')}</span><span>${pill(pr[q], q, ic(q === 'b' ? 'lowArrow' : 'highArrow', 6.500))}</span></div>`).join('')}</div>
                    <div style="width:4px;background:#d3d4e0;border-radius:2px"><div style="height:112px;background:#fafaff;border-radius:2px"></div></div></div>
                <div class="pager d-flex align-items-center justify-content-between px-1" style="height:16px">${perPage}${pages}</div>
                <div style="padding-top:15.500px">${cta('Spustiť časovač', 'timer')}</div></div>`;
        }

        // 8: gantt
        function gantt() {
            const rows = [['ZA-123456789', 'Pripravuje sa', 'y', 'grp up'], ['Úloha 01', 'Hotová', 'g', 'up'], [100], ['Úloha 02', 'Hotová', 'g', 'up'], [100], ['Úloha 03', 'Prebieha', 'y', 'up'], [43], ['Úloha 04', 'Nová', 'k', 'down'], ['Úloha 05', 'Nová', 'k', 'down'],
                ['ZA-123456789', 'Pripravuje sa', 'y', 'grp down'], ['Úloha 01', 'Hotová', 'g', 'down'], ['Úloha 02', 'Prebieha', 'y', 'down'], ['Úloha 03', 'Prebieha', 'y', 'down'], ['Úloha 04', 'Nová', 'k', 'down']];
            const row = ([t, s, k, m]) => s ? `<div class="g-row ${m.startsWith('grp') ? 'g-grp' : ''}"><div class="d-flex align-items-center gap-1" style="padding-left:${m.startsWith('grp') ? 7 : 14}px">${ic(m.replace('grp ', ''), 4)}<span style="margin-left:-1px">${t}</span></div><div class="d-flex align-items-center" style="padding-left:7px">${pill(`${s} ${ic('down', 6)}`, k)}</div></div>`
                : `<div class="g-row"><div style="padding:3px 7px 0 24px;font-size:5.400px">Stav kontrolného zoznamu<div class="d-flex align-items-center" style="gap:3px"><div class="prog flex-grow-1"><div style="width:${t === 43 ? 56 : 100}%;background:${t === 43 ? '#f0b21e' : '#15bd90'}"></div></div>${t}%</div></div><div></div></div>`;
            const w = 9.74, nums = Array.from({ length: 56 }, (_, i) => i < 30 ? i + 2 : i - 29);
            const bars = [[499, 780, 463, 'g'], [676, 947, 582, 'g'], [797, 1077, 700, 'y'], [1079, 1218, 819, 'k'], [1181, 1321, 878, 'k'], [499, 872, 997, 'g'], [872, 1077, 1056, 'y'], [960, 1283, 1115, 'y'], [1234, 1455, 1175, 'k']];
            const fill = { g: '#7de5c9', y: '#f0d18a', k: '#bfbfd2' };
            const y0 = 101.5, H = 303.6;
            const chart = svg(257.4, 86, 546, 319.100, `${nums.map((n, i) => T(262.200 + i * w, 93.500, 'PUSŠPSN'[i % 7], { s: 5, a: 'middle', f: i === 27 ? '#1c1a29' : '#9c9cad' })).join('')}
                ${R(257.400, y0, 546, H, '#fafaff')}${rep(55, i => L(257.400 + (i + 1) * w, 141.700, 257.400 + (i + 1) * w, 405, '#dcdde9', 1))}${rep(14, i => L(257.400, 121.700 + i * 20.240, 803, 121.700 + i * 20.240, '#eeeef7', 1))}
                ${R(257.400, 121.700, 546, 20, '#e4e4ef')}${R(257.400, 303.900, 546, 20, '#e4e4ef')}${R(257.400 + 27 * w, y0, w, H, '#d7d7e3')}
                ${nums.map((n, i) => T(262.200 + i * w, 111, n, { s: 5.200, a: 'middle', f: '#5c5b6c', w: i === 27 ? 700 : 500 })).join('')}${bars.map(([a, b, y, k]) => R(a / 1.8667 - 5.600, y / 3 - 9.200, (b - a) / 1.8667, 10.400, fill[k], 4, 'opacity=".420"')).join('')}`);
            return `<div class="pane s6 h-100" style="padding-left:12.500px">
                <div class="d-flex align-items-center" style="height:22px"><span class="ttl d-flex align-items-center">${ic('doc', 13)}<span class="ms-1">Zákazky</span></span><div class="ms-2">${listBtn}</div><div class="ms-auto" style="margin-right:7px">${find()}</div>${grp(['filter', 'calendar', 'plus'])}</div>
                <div style="padding-top:8px">${navRow(`<div class="soft soft-g d-flex align-items-center justify-content-between px-1" style="height:15px;width:61px">${ic('calendar', 7)}3 mesiace ${ic('down', 5)}</div>`)}</div>
                <div class="d-flex" style="margin-top:1px"><div class="gantt-side"><div class="d-flex text-center" style="height:15.500px;color:#9a9aab;padding-top:4px"><span style="width:137.700px">Zákazka</span><span class="flex-grow-1">Stav</span></div><div class="g-row"><div></div><div></div></div>${rows.map(row).join('')}</div>${chart}
                    <div style="width:4px;height:296px;margin:16px 0 0 3.500px;background:#e2e3ee;border-radius:2px;padding-top:71px"><div style="height:60px;background:#f2f3fb;border-radius:2px;box-shadow:0 .5px 1px #a9aabc"></div></div></div>
                <div class="scroll-h"><div></div></div><div style="padding-top:5.500px">${cta('Nová objednávka')}</div></div>`;
        }

        document.getElementById('rowTop').innerHTML = frame(['text'], sideA, orders()) + frame(['logo'], sideB, trips()) + frame(['logo'], sideC, finance()) + frame(['none'], sideC, jobs());
        document.getElementById('rowBottom').innerHTML = frame(['text', 1], sideA, customers()) + frame(['logo'], sideB, fleet()) + frame(['logo'], sideA, sheets(), true) + frame(['text', 1], sideA, gantt());
    </script>
</body>
</html>
